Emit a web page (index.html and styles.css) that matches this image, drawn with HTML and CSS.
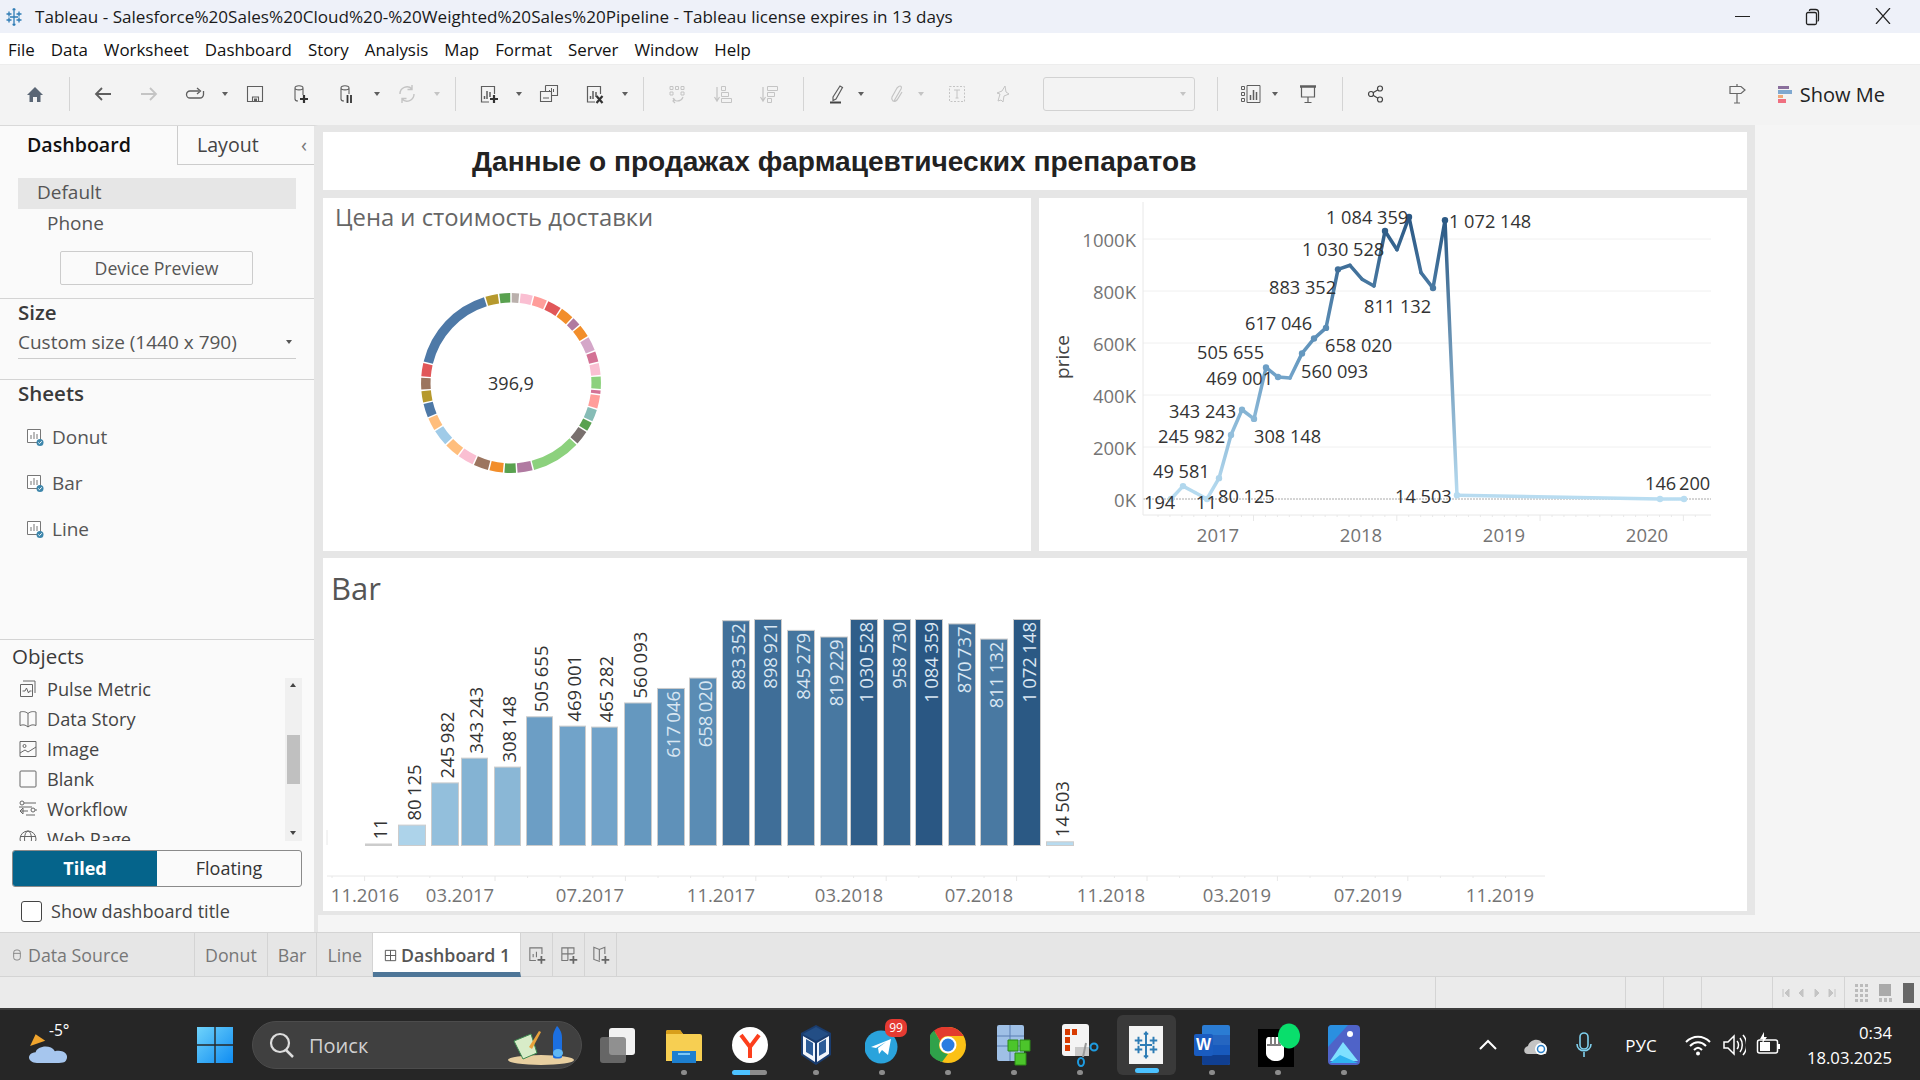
FILE: index.html
```html
<!DOCTYPE html>
<html lang="en">
<head>
    <meta charset="UTF-8">
    <meta name="viewport" content="width=device-width, initial-scale=1.0">
    <title>Tableau - Dashboard 1</title>
    <link rel="stylesheet" href="styles.css">
</head>
<body>
    <svg class="defs" aria-hidden="true">
        <defs>
            <linearGradient id="start-grad" x1="0" y1="0" x2="1" y2="1"><stop offset="0" stop-color="#6fd3fb"/><stop offset="1" stop-color="#0f8cf2"/></linearGradient>
        </defs>
        <symbol id="i-tableau" viewBox="0 0 20 20"><path d="M10 2v16M6 10h8M5 4.500v5M2.500 7h5M15 4.500v5M12.500 7h5M5 10.500v5M2.500 13h5M15 10.500v5M12.500 13h5M10 1v3M8.500 2.500h3M10 16v3M8.500 17.500h3" fill="none" stroke="#2e7cb5" stroke-width="1.300"/></symbol>
        <symbol id="i-home" viewBox="0 0 20 20"><path d="M2 11 10 3l8 8h-2.500v7H12v-5H8v5H4.500v-7z" fill="#5a6675"/></symbol>
        <symbol id="i-back" viewBox="0 0 20 20"><path d="M18 10H3M9 4l-6 6 6 6" fill="none" stroke="currentColor" stroke-width="1.800"/></symbol>
        <symbol id="i-fwd" viewBox="0 0 20 20"><path d="M2 10h15M11 4l6 6-6 6" fill="none" stroke="currentColor" stroke-width="1.800"/></symbol>
        <symbol id="i-redo" viewBox="0 0 20 20"><path d="M14 7H5a3.500 3.500 0 0 0 0 7h10a3.500 3.500 0 0 0 3.500-3.500V7" fill="none" stroke="currentColor" stroke-width="1.300"/><path d="m12 4 3.500 3-3.500 3" fill="none" stroke="currentColor" stroke-width="1.300"/></symbol>
        <symbol id="i-save" viewBox="0 0 20 20"><path d="M2.500 2.500h15v15h-15z" fill="none" stroke="currentColor" stroke-width="1.100"/><path d="M7.500 13h6v4.500h-6z" fill="none" stroke="currentColor" stroke-width="1.100"/><path d="M9 14.500h3v3H9z" fill="currentColor"/></symbol>
        <symbol id="i-ds-add" viewBox="0 0 20 20"><path d="M4 4c0-3 8-3 8 0v7M4 4v11c0 1 1 2 3 2M4 4c0 2.500 8 2.500 8 0" fill="none" stroke="currentColor" stroke-width="1.100"/><path d="M13 11v8M9 15h8" stroke="#333" stroke-width="2.200"/></symbol>
        <symbol id="i-ds-pause" viewBox="0 0 20 20"><path d="M4 4c0-3 8-3 8 0v6M4 4v11c0 1 1 2 3 2M4 4c0 2.500 8 2.500 8 0" fill="none" stroke="currentColor" stroke-width="1.100"/><path d="M10.500 11v8M14 11v8" stroke="#333" stroke-width="1.800"/></symbol>
        <symbol id="i-refresh" viewBox="0 0 20 20"><path d="M3 10a7 7 0 0 1 12-5M17 10a7 7 0 0 1-12 5M15 1v4.500h-4.500M5 19v-4.500h4.500" fill="none" stroke="currentColor" stroke-width="1.400"/></symbol>
        <symbol id="i-new" viewBox="0 0 20 20"><path d="M10 18H2.500V2.500h13V10" fill="none" stroke="currentColor" stroke-width="1.200"/><path d="M5.500 15v-3M8 15V7M11 13V8" stroke="currentColor" stroke-width="1.500"/><path d="M15 11v8M11 15h8" stroke="#333" stroke-width="2.200"/></symbol>
        <symbol id="i-dup" viewBox="0 0 20 20"><path d="M6.500 1.500h12v10H13M6.500 1.500V7M1.500 7.500h11v10h-11z" fill="none" stroke="currentColor" stroke-width="1.100"/><path d="M10.500 8V6M12.500 8V4M14.500 8V5M5 15v-2M7 15v-2M9 15v-2" stroke="currentColor"/></symbol>
        <symbol id="i-clear" viewBox="0 0 20 20"><path d="M10 18H2.500V2.500h13V10" fill="none" stroke="currentColor" stroke-width="1.200"/><path d="M5.500 15v-3M8 15V7M11 13V8" stroke="currentColor" stroke-width="1.500"/><path d="m11.500 12 6 7M17.500 12l-6 7" stroke="#333" stroke-width="2.200"/></symbol>
        <symbol id="i-swap" viewBox="0 0 20 20"><path d="M3 2.500h3v3H3zM8.500 2.500h3v3h-3zM14 2.500h3v3h-3zM3 8h3v3H3zM14 8h3v3h-3z" fill="none" stroke="currentColor"/><path d="M16 13c-1 3-4 4-6 4-1 0-3-1-4-3M8 19l-2-2 2-2" fill="none" stroke="currentColor" stroke-width="1.200"/></symbol>
        <symbol id="i-sort" viewBox="0 0 20 20"><path d="M4 3v14M1.500 13 4 17l2.500-4" fill="none" stroke="currentColor" stroke-width="1.200"/><path d="M8.500 2.500h4v4h-4zM8.500 8.500h7v4h-7zM8.500 14.500h10v4h-10z" fill="none" stroke="currentColor"/></symbol>
        <symbol id="i-sort-d" viewBox="0 0 20 20"><path d="M4 3v14M1.500 13 4 17l2.500-4" fill="none" stroke="currentColor" stroke-width="1.200"/><path d="M8.500 2.500h10v4h-10zM8.500 8.500h7v4h-7zM8.500 14.500h4v4h-4z" fill="none" stroke="currentColor"/></symbol>
        <symbol id="i-pen" viewBox="0 0 20 20"><path d="M6 13 13 2l2.500 1.500L9 15l-3 1.500z" fill="none" stroke="currentColor" stroke-width="1.200"/><path d="M3 18.500h11" stroke="#444" stroke-width="2"/></symbol>
        <symbol id="i-clip" viewBox="0 0 20 20"><path d="M7 17 14 5c1-2 0-3-1-3s-2 1-3 2L5 13c-1 2 0 3 1 4 2 1 3 0 4-1l5-8" fill="none" stroke="currentColor" stroke-width="1.200"/></symbol>
        <symbol id="i-text" viewBox="0 0 20 20"><path d="M2.500 2.500h15v15h-15z" fill="none" stroke="currentColor" stroke-dasharray="2 1.500"/><path d="M7 6h6M10 6v8M8.500 14h3" stroke="currentColor" fill="none"/></symbol>
        <symbol id="i-pin" viewBox="0 0 20 20"><path d="m12 2 1 6 3 2-5 2-1 6-2-2-3 1 2-7-3-1 5-2z" fill="none" stroke="currentColor"/></symbol>
        <symbol id="i-view" viewBox="0 0 20 20"><path d="M.5 2.500h3v3h-3zM.5 8.500h3v3h-3zM.5 14.500h3v3h-3zM6 1.500h13v17H6z" fill="none" stroke="currentColor"/><path d="M9.500 16v-5M12.500 16V6M15.500 16v-8" stroke="currentColor" stroke-width="1.500"/></symbol>
        <symbol id="i-present" viewBox="0 0 20 20"><path d="M2 2.500h16" stroke="currentColor" stroke-width="2.500"/><path d="M3.500 3v10h13V3M10 13v6M6.500 18.500h7" fill="none" stroke="currentColor" stroke-width="1.200"/></symbol>
        <symbol id="i-share" viewBox="0 0 20 20"><circle cx="14" cy="4.500" r="2.500" fill="none" stroke="#444" stroke-width="1.200"/><circle cx="5" cy="10" r="2.500" fill="none" stroke="#444" stroke-width="1.200"/><circle cx="14" cy="15.500" r="2.500" fill="none" stroke="#444" stroke-width="1.200"/><path d="m7 8.700 5-3M7 11.300l5 3" stroke="#444" stroke-width="1.200"/></symbol>
        <symbol id="i-sign" viewBox="0 0 20 20"><path d="M3 2.500h11l4 3.500-4 3.500H3zM10 10v9M7 19h6M10 0v2" fill="none" stroke="#666" stroke-width="1.200"/></symbol>
        <symbol id="i-sheet" viewBox="0 0 20 20"><path d="M2.500 2.500h13v13h-13z" fill="#fff" stroke="#777"/><path d="M6 12V8M9 12V5M12 12V7" stroke="#777"/><circle cx="15" cy="15.500" r="3.500" fill="#3d86ab"/><path d="m13.300 15.500 1.200 1.200 2.200-2.400" fill="none" stroke="#fff"/></symbol>
        <symbol id="i-pulse" viewBox="0 0 20 20"><path d="M5 2h12v12M2.500 5.500h12v12h-12z" fill="none" stroke="#666"/><path d="M4.500 12h2.500l1.500-3 2 5 1-2h2" fill="none" stroke="#666"/></symbol>
        <symbol id="i-book" viewBox="0 0 20 20"><path d="M10 4.500C7 2 4 2.500 2 3v13.500c3-1 5-1 8 1.500 3-2.500 5-2.500 8-1.500V3c-2-.5-5-1-8 1.500zM10 4.500V18" fill="none" stroke="#666"/></symbol>
        <symbol id="i-image" viewBox="0 0 20 20"><path d="M2 2.500h16v15H2z" fill="none" stroke="#666"/><circle cx="6.500" cy="7" r="1.500" fill="none" stroke="#666"/><path d="m2 14 5-3 3 2 8-5" fill="none" stroke="#666"/></symbol>
        <symbol id="i-blank" viewBox="0 0 20 20"><rect x="2" y="2" width="16" height="16" rx="1" fill="none" stroke="#666"/></symbol>
        <symbol id="i-flow" viewBox="0 0 20 20"><circle cx="4" cy="4" r="2" fill="none" stroke="#666"/><circle cx="15" cy="11" r="2" fill="none" stroke="#666"/><path d="M6 4h12M1 8h13M17 11h2M2 12h8M5 9l-3 3 3 3zM8 16h9" fill="none" stroke="#666"/></symbol>
        <symbol id="i-web" viewBox="0 0 20 20"><circle cx="10" cy="10" r="8" fill="none" stroke="#666"/><ellipse cx="10" cy="10" rx="3.500" ry="8" fill="none" stroke="#666"/><path d="M2 7.500h16M2 12.500h16" stroke="#666"/></symbol>
        <symbol id="i-db" viewBox="0 0 12 16"><rect x="2" y="2" width="8" height="12" rx="3" fill="none" stroke="currentColor"/><path d="M2 6h8" stroke="currentColor"/></symbol>
        <symbol id="i-grid" viewBox="0 0 16 16"><path d="M2.500 2.500h11v11h-11zM8 2.500v11M2.500 8h11" fill="none" stroke="#555"/></symbol>
        <symbol id="i-tab-sheet" viewBox="0 0 20 20"><path d="M9 15H3.500V3.500h11V9" fill="none" stroke="#777"/><path d="M6.500 12V9M9.500 12V7" stroke="#777"/><path d="M14 11v7M10.500 14.500h7" stroke="#666" stroke-width="1.600"/></symbol>
        <symbol id="i-tab-dash" viewBox="0 0 20 20"><path d="M9 15H3.500V3.500h11V9M9 3.500V15M3.500 9H14" fill="none" stroke="#777"/><path d="M14 11v7M10.500 14.500h7" stroke="#666" stroke-width="1.600"/></symbol>
        <symbol id="i-tab-story" viewBox="0 0 20 20"><path d="M9 16 3.500 14V3l5 2 5-2v6" fill="none" stroke="#777"/><path d="M8.500 5v10" stroke="#777"/><path d="M14 11v7M10.500 14.500h7" stroke="#666" stroke-width="1.600"/></symbol>
    </svg>

    <div class="app">
        <div class="titlebar">
            <svg class="title-icon"><use href="#i-tableau"/></svg>
            <span class="title-text">Tableau - Salesforce%20Sales%20Cloud%20-%20Weighted%20Sales%20Pipeline - Tableau license expires in 13 days</span>
            <div class="win-buttons">
                <span class="win-btn"><svg width="16" height="16"><path d="M0 8.500h15" stroke="#222"/></svg></span>
                <span class="win-btn"><svg width="16" height="18"><rect x="1.500" y="4.500" width="10" height="12" rx="1.500" fill="none" stroke="#222" stroke-width="1.300"/><path d="M4.500 3V2.500a1 1 0 0 1 1-1h5a3 3 0 0 1 3 3V12a1 1 0 0 1-1 1" fill="none" stroke="#222" stroke-width="1.300"/></svg></span>
                <span class="win-btn"><svg width="16" height="16"><path d="m1 0 14 16M15 0 1 16" stroke="#222" stroke-width="1.200"/></svg></span>
            </div>
        </div>

        <div class="menubar">
            <span>File</span><span>Data</span><span>Worksheet</span><span>Dashboard</span><span>Story</span><span>Analysis</span><span>Map</span><span>Format</span><span>Server</span><span>Window</span><span>Help</span>
        </div>

        <div class="toolbar">
            <span class="tool"><svg class="ico"><use href="#i-home"/></svg></span>
            <span class="sep"></span>
            <span class="tool"><svg class="ico"><use href="#i-back"/></svg></span>
            <span class="tool off"><svg class="ico"><use href="#i-fwd"/></svg></span>
            <span class="tool"><svg class="ico"><use href="#i-redo"/></svg></span><span class="caret"></span>
            <span class="tool"><svg class="ico"><use href="#i-save"/></svg></span>
            <span class="tool"><svg class="ico"><use href="#i-ds-add"/></svg></span>
            <span class="tool"><svg class="ico"><use href="#i-ds-pause"/></svg></span><span class="caret"></span>
            <span class="tool off"><svg class="ico"><use href="#i-refresh"/></svg></span><span class="caret off"></span>
            <span class="sep"></span>
            <span class="tool"><svg class="ico"><use href="#i-new"/></svg></span><span class="caret"></span>
            <span class="tool"><svg class="ico"><use href="#i-dup"/></svg></span>
            <span class="tool"><svg class="ico"><use href="#i-clear"/></svg></span><span class="caret"></span>
            <span class="sep"></span>
            <span class="tool off"><svg class="ico"><use href="#i-swap"/></svg></span>
            <span class="tool off"><svg class="ico"><use href="#i-sort"/></svg></span>
            <span class="tool off"><svg class="ico"><use href="#i-sort-d"/></svg></span>
            <span class="sep"></span>
            <span class="tool"><svg class="ico"><use href="#i-pen"/></svg></span><span class="caret tight"></span>
            <span class="tool off"><svg class="ico"><use href="#i-clip"/></svg></span><span class="caret off tight"></span>
            <span class="tool off"><svg class="ico"><use href="#i-text"/></svg></span>
            <span class="tool off"><svg class="ico"><use href="#i-pin"/></svg></span>
            <span class="combo"><span class="caret off"></span></span>
            <span class="sep"></span>
            <span class="tool"><svg class="ico"><use href="#i-view"/></svg></span><span class="caret tight short"></span>
            <span class="tool"><svg class="ico"><use href="#i-present"/></svg></span>
            <span class="sep"></span>
            <span class="tool"><svg class="ico"><use href="#i-share"/></svg></span>
            <div class="toolbar-right">
                <svg class="ico"><use href="#i-sign"/></svg>
                <span class="showme">
                    <span class="showme-bars"><i class="b1"></i><i class="b2"></i><i class="b3"></i><i class="b4"></i></span>
                    Show Me
                </span>
            </div>
        </div>

        <div class="workspace">
            <aside class="sidebar">
                <div class="side-tabs">
                    <div class="side-tab active">Dashboard</div>
                    <div class="side-tab">Layout <span class="collapse">‹</span></div>
                </div>
                <div class="side-section devices">
                    <div class="device selected">Default</div>
                    <div class="device phone">Phone</div>
                    <div class="device-btn">Device Preview</div>
                </div>
                <div class="side-section size">
                    <div class="side-heading">Size</div>
                    <div class="size-select">Custom size (1440 x 790)<span class="caret"></span></div>
                </div>
                <div class="side-section sheets">
                    <div class="side-heading">Sheets</div>
                    <div class="sheet"><svg class="sheet-icon"><use href="#i-sheet"/></svg>Donut</div>
                    <div class="sheet"><svg class="sheet-icon"><use href="#i-sheet"/></svg>Bar</div>
                    <div class="sheet"><svg class="sheet-icon"><use href="#i-sheet"/></svg>Line</div>
                </div>
                <div class="objects">
                    <div class="objects-heading">Objects</div>
                    <div class="object-list">
                        <div class="object-items">
                            <div class="object"><svg class="object-icon"><use href="#i-pulse"/></svg>Pulse Metric</div>
                            <div class="object"><svg class="object-icon"><use href="#i-book"/></svg>Data Story</div>
                            <div class="object"><svg class="object-icon"><use href="#i-image"/></svg>Image</div>
                            <div class="object"><svg class="object-icon"><use href="#i-blank"/></svg>Blank</div>
                            <div class="object"><svg class="object-icon"><use href="#i-flow"/></svg>Workflow</div>
                            <div class="object"><svg class="object-icon"><use href="#i-web"/></svg>Web Page</div>
                        </div>
                        <div class="scrollbar">
                            <span class="arrow up"></span>
                            <span class="thumb"></span>
                            <span class="arrow down"></span>
                        </div>
                    </div>
                    <div class="toggle">
                        <div class="toggle-btn on">Tiled</div>
                        <div class="toggle-btn">Floating</div>
                    </div>
                    <label class="show-title"><span class="checkbox"></span>Show dashboard title</label>
                </div>
            </aside>

            <main class="dash">
                <div class="tile dash-title">Данные о продажах фармацевтических препаратов</div>
                <div class="dash-row">
                    <div class="tile chart-tile">
                        <div class="tile-title donut-title">Цена и стоимость доставки</div>
                        <svg id="donut" class="chart donut-chart"></svg>
                    </div>
                    <div class="tile chart-tile">
                        <svg id="line" class="chart line-chart"></svg>
                    </div>
                </div>
                <div class="tile chart-tile bar-tile">
                    <div class="tile-title bar-title">Bar</div>
                    <svg id="bar" class="chart bar-chart"></svg>
                </div>
            </main>
        </div>

        <div class="tabs">
            <div class="tab source"><svg class="tab-db"><use href="#i-db"/></svg>Data Source</div>
            <div class="tab">Donut</div>
            <div class="tab">Bar</div>
            <div class="tab">Line</div>
            <div class="tab current"><svg class="tab-grid"><use href="#i-grid"/></svg>Dashboard 1</div>
            <div class="tab add"><svg class="tab-add"><use href="#i-tab-sheet"/></svg></div>
            <div class="tab add"><svg class="tab-add"><use href="#i-tab-dash"/></svg></div>
            <div class="tab add"><svg class="tab-add"><use href="#i-tab-story"/></svg></div>
        </div>

        <div class="status">
            <span class="cell c1"></span><span class="cell c2"></span><span class="cell c3"></span><span class="cell c3"></span><span class="cell c4"></span>
            <span class="cell c5">
                <svg width="54" height="12"><path d="M1 2v8M7 2 3 6l4 4zM21 2l-4 4 4 4zM33 2l4 4-4 4zM47 2l4 4-4 4zM53 2v8" fill="#c4c4c4" stroke="#c4c4c4"/></svg>
            </span>
            <span class="cell c6">
                <svg width="14" height="20"><path d="M1 1h3v3H1zM6 1h3v3H6zM11 1h3v3h-3zM1 6h3v3H1zM6 6h3v3H6zM11 6h3v3h-3zM1 11h3v3H1zM6 11h3v3H6zM11 11h3v3h-3zM1 16h3v3H1zM6 16h3v3H6zM11 16h3v3h-3z" fill="#bbb"/></svg>
                <svg width="14" height="20"><path d="M1 1h12v12H1z" fill="#aaa"/><path d="M1 15h3v4H1zM6 15h3v4H6zM11 15h3v4h-3z" fill="#bbb"/></svg>
                <svg width="12" height="20"><path d="M1 0h11v20H1z" fill="#666"/></svg>
            </span>
        </div>

        <div class="taskbar">
            <div class="weather">
                <svg width="44" height="36" viewBox="0 0 32 34" preserveAspectRatio="none"><path d="M3 16 7 5l7 6z" fill="#f0a42d"/><path d="M8 32c-7 0-8-9-1-10 1-6 11-8 14-1 6-2 11 3 8 9-1 2-3 2-5 2z" fill="#a6c6ee"/></svg>
                <span class="temp">-5°</span>
            </div>
            <div class="task-app start">
                <svg width="36" height="36"><path d="M0 0h17.300v17.300H0zM18.700 0H36v17.300H18.700zM0 18.700h17.300V36H0zM18.700 18.700H36V36H18.700z" fill="url(#start-grad)"/></svg>
            </div>
            <div class="search">
                <svg width="28" height="28"><circle cx="12" cy="12" r="9" fill="none" stroke="#ddd" stroke-width="2.200"/><path d="m18 19 7 7" stroke="#ddd" stroke-width="2.500"/></svg>
                <span class="search-text">Поиск</span>
                <svg class="search-art" width="68" height="40"><ellipse cx="34" cy="35" rx="33" ry="5" fill="#e8cfa0"/><path d="M7 16 24 9l6 19-14 6z" fill="#d8ecc8" stroke="#3d8a50"/><path d="m22 22 10-16 2 1-9 17z" fill="#e9a23b"/><path d="M46 12c0-5 3-9 4-11 2 2 5 6 5 11v20c0 2-9 2-9 0z" fill="#1c6fe0"/><ellipse cx="51" cy="28" rx="5" ry="4" fill="#5fb8f5"/></svg>
            </div>
            <div class="task-app">
                <svg width="38" height="38"><rect x="10" y="2" width="26" height="27" rx="3" fill="#f2f2f2"/><rect x="1" y="11" width="26" height="26" rx="3" fill="#777" opacity=".8"/></svg>
            </div>
            <div class="task-app dot">
                <svg width="38" height="36"><path d="M1 5a2 2 0 0 1 2-2h12l3 4h17a2 2 0 0 1 2 2v25H1z" fill="#f7cf52"/><path d="M1 5a2 2 0 0 1 2-2h12l3 4H1z" fill="#d89f1b"/><path d="M7 24h24v12H7z" fill="#1d7fcf"/><path d="M13 27h12" stroke="#7cc7f5" stroke-width="2"/></svg>
            </div>
            <div class="task-app dot active-dash">
                <svg width="38" height="38"><circle cx="19" cy="19" r="18" fill="#fff"/><path d="M10 9l9 12 9-12M19 21v11" fill="none" stroke="#fc3f1d" stroke-width="4"/></svg>
            </div>
            <div class="task-app dot">
                <svg width="34" height="42"><path d="M17 1 32 9v22L17 41 2 31V9z" fill="#1a3c6e"/><path d="M17 3 30 10 17 17 4 10z" fill="#234e85"/><path d="M4 12l12 7v19L4 30zM30 12 18 19v19l12-8z" fill="#f3f6fb"/><path d="M7 15l7 4v13l-7-4zM27 15l-7 4v13l7-4z" fill="#2c5c98"/></svg>
            </div>
            <div class="task-app dot telegram">
                <svg width="34" height="38"><circle cx="16" cy="21" r="16.500" fill="#2aa3dc"/><path d="m6 21 20-8-3 16-6-5-3 4-1-6 8-6-10 6z" fill="#fff"/></svg>
                <span class="badge">99</span>
            </div>
            <div class="task-app dot">
                <svg width="36" height="36"><circle cx="18" cy="18" r="18" fill="#fbc116"/><path d="M18 0a18 18 0 0 1 15.600 9H18a9 9 0 0 0-8 5L4 3.500A18 18 0 0 1 18 0z" fill="#e33b2e"/><path d="M4 3.500 10 14a9 9 0 0 0 8 13l-6 8A18 18 0 0 1 4 3.500z" fill="#2fa24a"/><circle cx="18" cy="18" r="8.500" fill="#fff"/><circle cx="18" cy="18" r="6.500" fill="#2a7de1"/></svg>
            </div>
            <div class="task-app dot">
                <svg width="36" height="42"><rect x="1" y="1" width="27" height="36" rx="2" fill="#9fc0e6"/><path d="M1 12h27M1 22h27M14 1v36" stroke="#5a7fb3"/><path d="M12 16h10v11H12zM24 16h10v11H24zM19 29h11v12H19z" fill="#4cc52b" stroke="#2a8a16"/></svg>
            </div>
            <div class="task-app dot">
                <svg width="38" height="44"><rect x="1" y="1" width="27" height="32" rx="3" fill="#f4f4f4"/><path d="M4 6h5v6H4zM11 6h5v6h-5zM4 14h5v6H4zM4 22h5v6H4z" fill="#d83b01"/><path d="M14 24h14v9H14z" fill="#c9c9c9"/><path d="M25 20 22 34" stroke="#999" stroke-width="2"/><circle cx="33" cy="24" r="3.500" fill="none" stroke="#1e9be0" stroke-width="2"/><ellipse cx="20" cy="39" rx="3" ry="4" fill="none" stroke="#1e9be0" stroke-width="2"/></svg>
            </div>
            <div class="task-app tableau">
                <span class="tableau-box"><svg width="30" height="30"><use href="#i-tableau"/></svg></span>
            </div>
            <div class="task-app dot">
                <svg width="36" height="40"><rect x="8" y="0" width="28" height="40" rx="2" fill="#2b7cd3"/><path d="M8 10h28v10H8z" fill="#2566c1"/><path d="M8 20h28v10H8z" fill="#185abd"/><path d="M8 30h28v8a2 2 0 0 1-2 2H10a2 2 0 0 1-2-2z" fill="#103f91"/><rect x="0" y="9" width="19" height="22" rx="2" fill="#1a5cc0"/><text x="9.500" y="25" class="word-w">W</text></svg>
            </div>
            <div class="task-app dot">
                <svg width="44" height="44"><rect x="2" y="6" width="36" height="38" fill="#000"/><path d="M10 18c0-4 2-4 3-4h10c3 0 5 2 5 4v14c0 4-4 6-8 6-6 0-10-4-10-8z" fill="#fff"/><path d="M15 14v7M19 14v7M23 14v7M11 22h14" stroke="#000"/><ellipse cx="33" cy="13" rx="11" ry="12.500" fill="#09de6c"/></svg>
            </div>
            <div class="task-app dot">
                <svg width="34" height="40"><rect x="1" y="0" width="32" height="40" rx="4" fill="#4f63c8"/><path d="M1 4a4 4 0 0 1 4-4h16L1 22z" fill="#2a8fe0"/><path d="M3 36 16 17l15 19z" fill="#7fe0ff"/><path d="M3 38 13 30l18 8z" fill="#2fb3f0"/><circle cx="23" cy="9" r="3" fill="#fff"/></svg>
            </div>
            <div class="tray">
                <span class="tray-item chevron"><svg width="18" height="12"><path d="m1 10 8-8 8 8" fill="none" stroke="#fff" stroke-width="2"/></svg></span>
                <span class="tray-item cloud"><svg width="26" height="22"><path d="M5 20c-5 0-5-7 0-8 1-6 11-9 14-3 3 0 6 4 4 11z" fill="#c4c4c4"/><circle cx="18" cy="15" r="6" fill="#fff"/><circle cx="18" cy="15" r="3.500" fill="none" stroke="#2a80c8" stroke-width="1.500"/></svg></span>
                <span class="tray-item mic"><svg width="18" height="26"><rect x="5" y="1" width="8" height="16" rx="4" fill="none" stroke="#7fd0ee" stroke-width="1.600"/><path d="M2 12c0 9 14 9 14 0M9 20v5" fill="none" stroke="#7fd0ee" stroke-width="1.600"/></svg></span>
                <span class="tray-lang">РУС</span>
                <span class="tray-item wifi"><svg width="26" height="22"><path d="M1 8c7-7 17-7 24 0M5 12c5-5 11-5 16 0M9 16c3-3 5-3 8 0" fill="none" stroke="#fff" stroke-width="2"/><circle cx="13" cy="19.500" r="2" fill="#fff"/></svg></span>
                <span class="tray-item volume"><svg width="26" height="24"><path d="M2 9h4l6-6v18l-6-6H2z" fill="none" stroke="#fff" stroke-width="1.500"/><path d="M15 8c2 2 2 6 0 8M18 5c3 4 3 10 0 14M21 2c5 6 5 14 0 20" fill="none" stroke="#fff" stroke-width="1.500"/></svg></span>
                <span class="tray-item battery"><svg width="26" height="26"><rect x="1.500" y="8" width="20" height="13" rx="2" fill="none" stroke="#fff" stroke-width="1.500"/><path d="M4 10h10v9H4z" fill="#fff"/><path d="M23 12v5" stroke="#fff" stroke-width="2"/><path d="M8 0 4 7h3l-1 5 5-7H8z" fill="#fff"/></svg></span>
                <div class="clock"><span>0:34</span><span>18.03.2025</span></div>
            </div>
        </div>
    </div>

    <script src="charts.js"></script>
</body>
</html>
```

FILE: styles.css
```css
* {
    box-sizing: border-box;
}
body {
    margin: 0;
    width: 1920px;
    height: 1080px;
    overflow: hidden;
    font-family: 'Open Sans', sans-serif;
    color: #333;
    background: #f5f5f5;
}
.defs {
    position: absolute;
    width: 0;
    height: 0;
}
.app {
    display: flex;
    flex-direction: column;
    height: 1080px;
}

/* window chrome */
.titlebar {
    height: 33px;
    flex: none;
    display: flex;
    align-items: center;
    background: #eef1f9;
    font-size: 17.100px;
    color: #1a1a1a;
}
.title-icon {
    width: 20px;
    height: 20px;
    margin: 0 11px 0 4px;
}
.win-buttons {
    margin-left: auto;
    display: flex;
    padding-right: 2px;
}
.win-btn {
    width: 70px;
    display: flex;
    justify-content: center;
}
.menubar {
    height: 31px;
    flex: none;
    display: flex;
    align-items: center;
    gap: 16px;
    padding: 2px 0 0 8px;
    background: #fff;
    font-size: 16.900px;
    color: #111;
}

/* toolbar */
.toolbar {
    height: 61px;
    flex: none;
    display: flex;
    align-items: center;
    padding: 0 35px 2px 12px;
    background: #f3f3f3;
    color: #5e5e5e;
    border-top: 1px solid #ededed;
}
.tool {
    width: 46px;
    display: flex;
    justify-content: center;
}
.tool.off,
.caret.off {
    color: #c4c4c4;
}
.ico {
    width: 20px;
    height: 20px;
}
.caret {
    width: 14px;
    display: flex;
    justify-content: center;
}
.caret.tight {
    margin: 0 6px 0 -6px;
}
.caret.tight.short {
    margin-right: 3px;
}
.caret::before {
    content: '';
    border: 3px solid transparent;
    border-top: 4px solid currentColor;
    border-bottom: 0;
}
.sep {
    width: 22px;
    height: 34px;
    background: linear-gradient(#d4d4d4, #d4d4d4) center / 1px 100% no-repeat;
}
.combo {
    width: 152px;
    height: 34px;
    margin: 0 11px 0 17px;
    display: flex;
    align-items: center;
    justify-content: flex-end;
    padding-right: 4px;
    border: 1px solid #d2d2d2;
    border-radius: 3px;
}
.toolbar-right {
    margin-left: auto;
    display: flex;
    align-items: center;
    gap: 31px;
}
.showme {
    display: flex;
    align-items: center;
    gap: 8px;
    font-size: 20px;
    color: #222;
}
.showme-bars {
    display: flex;
    flex-direction: column;
    gap: 1px;
}
.showme-bars i {
    display: block;
    height: 3.500px;
}
.showme-bars .b1 { width: 11px; background: #8a6f9c; }
.showme-bars .b2 { width: 14px; background: #7fa8d0; }
.showme-bars .b3 { width: 5px; background: #f0a878; }
.showme-bars .b4 { width: 8px; background: #ef6f80; }

/* left pane */
.workspace {
    height: 807px;
    flex: none;
    display: flex;
    background: #f5f5f5;
}
.sidebar {
    width: 318px;
    flex: none;
    display: flex;
    flex-direction: column;
    background: #fafafa;
    border-right: 4px solid #e6e6e6;
    border-top: 1px solid #d9d9d9;
}
.side-tabs {
    height: 39px;
    flex: none;
    display: flex;
}
.side-tab {
    font-size: 19.600px;
    line-height: 37px;
    display: flex;
    padding-bottom: 2px;
    color: #444;
    position: relative;
}
.side-tab.active {
    width: 177px;
    padding-left: 27px;
    font-weight: 600;
    color: #111;
}
.side-tab:not(.active) {
    flex: 1;
    padding-left: 19px;
    border-left: 1px solid #ccc;
    border-bottom: 1px solid #ccc;
}
.collapse {
    position: absolute;
    right: 7px;
    top: 0;
    font-size: 20px;
    color: #777;
}
.side-section {
    border-bottom: 1px solid #d4d4d4;
    padding: 0 18px;
    flex: none;
}
.devices {
    height: 134px;
    padding-top: 13px;
}
.device {
    height: 31px;
    line-height: 29px;
    font-size: 19px;
    color: #555;
}
.device.selected {
    padding-left: 19px;
    background: #e6e6e6;
    line-height: 28px;
}
.device.phone {
    height: 30px;
    padding-left: 29px;
}
.device-btn {
    width: 193px;
    height: 34px;
    margin: 12px 0 0 42px;
    border: 1px solid #ccc;
    border-radius: 2px;
    text-align: center;
    line-height: 32px;
    font-size: 17.700px;
    color: #555;
}
.size {
    height: 81px;
}
.sheets {
    height: 260px;
}
.side-heading {
    height: 30px;
    line-height: 26px;
    font-size: 20.500px;
    font-weight: 600;
    color: #3a3a3a;
}
.size-select {
    height: 30px;
    line-height: 26px;
    display: flex;
    justify-content: space-between;
    align-items: center;
    padding-bottom: 3px;
    border-bottom: 1px solid #ccc;
    font-size: 19px;
    color: #555;
}
.sheet {
    height: 46px;
    display: flex;
    align-items: center;
    font-size: 19px;
    color: #555;
    padding-left: 7px;
}
.sheets .side-heading {
    margin-bottom: 4px;
}
.sheet-icon {
    width: 20px;
    height: 20px;
    margin-right: 7px;
}
.objects {
    flex: 1;
    padding: 2px 12px 0;
    min-height: 0;
}
.objects-heading {
    height: 36px;
    line-height: 28px;
    font-size: 20.500px;
    font-weight: 500;
    color: #3a3a3a;
}
.object-list {
    height: 163px;
    display: flex;
    justify-content: space-between;
    overflow: hidden;
}
.object {
    height: 30px;
    display: flex;
    align-items: center;
    font-size: 18.200px;
    color: #444;
    padding-left: 6px;
}
.object-icon {
    width: 20px;
    height: 20px;
    margin-right: 9px;
}
.object-items {
    margin-top: -4px;
}
.scrollbar {
    width: 17px;
    display: flex;
    flex-direction: column;
    align-items: center;
    background: #f0f0f0;
    position: relative;
}
.thumb {
    position: absolute;
    left: 2px;
    top: 57px;
    width: 13px;
    height: 49px;
    background: #c0c0c0;
}
.arrow {
    position: absolute;
    left: 5px;
    border: 3.500px solid transparent;
}
.arrow.up {
    top: 5px;
    border-bottom: 4px solid #444;
    border-top: 0;
}
.arrow.down {
    bottom: 6px;
    border-top: 4px solid #444;
    border-bottom: 0;
}
.toggle {
    display: flex;
    height: 37px;
    margin-top: 9px;
    width: 290px;
    border: 1px solid #8a8a8a;
    border-radius: 3px;
    overflow: hidden;
}
.toggle-btn {
    flex: 1;
    text-align: center;
    line-height: 35px;
    font-size: 18px;
    color: #333;
}
.toggle-btn.on {
    background: #05648b;
    color: #fff;
    font-weight: 700;
}
.show-title {
    display: flex;
    align-items: center;
    gap: 9px;
    margin: 13px 0 0 9px;
    font-size: 18.100px;
    line-height: 22px;
    color: #444;
}
.checkbox {
    width: 21px;
    height: 21px;
    border: 1.500px solid #444;
    border-radius: 3px;
    background: #fff;
}

/* dashboard */
.dash {
    width: 1437px;
    height: 790px;
    flex: none;
    display: flex;
    flex-direction: column;
    padding: 7px 8px 0 5px;
    background: #e6e6e6;
}
.tile {
    background: #fff;
}
.dash-title {
    height: 58px;
    padding-left: 149px;
    line-height: 60px;
    font-family: 'Liberation Sans', sans-serif;
    font-size: 28.100px;
    font-weight: 700;
    color: #222;
}
.dash-row {
    display: flex;
    gap: 8px;
    margin-top: 8px;
}
.chart-tile {
    width: 708px;
    height: 353px;
}
.bar-tile {
    width: 1424px;
    margin-top: 7px;
}
.tile-title {
    color: #666;
}
.donut-title {
    height: 40px;
    line-height: 38px;
    padding-left: 12px;
    font-size: 23.800px;
}
.bar-title {
    height: 60px;
    line-height: 60px;
    padding-left: 8px;
    font-size: 31px;
    color: #555;
}
.chart {
    display: block;
    width: 100%;
    font-family: 'Open Sans', sans-serif;
}
.donut-chart {
    height: 313px;
}
.line-chart {
    height: 353px;
}
.bar-chart {
    height: 293px;
}
.value {
    font-size: 18.200px;
    fill: #333;
}
.bar-value {
    font-size: 18.500px;
    word-spacing: -1.500px;
    fill: #333;
}
.bar-value.inside {
    fill: #d8e6f2;
}
.axis {
    font-size: 18.500px;
    fill: #747474;
}
.axis-title {
    font-size: 19px;
    fill: #444;
}
.center-value {
    font-size: 18px;
    fill: #333;
    text-anchor: middle;
}
.grid {
    stroke: #f0f0f0;
    stroke-width: 1;
}
.tick {
    stroke: #e8e8e8;
    stroke-width: 1;
}

/* sheet tabs and status */
.tabs {
    height: 45px;
    flex: none;
    display: flex;
    background: #e6e6e6;
    border-top: 1px solid #d4d4d4;
    border-bottom: 1px solid #d4d4d4;
    font-size: 17.800px;
    color: #777;
}
.tab {
    display: flex;
    align-items: center;
    padding: 0 10px;
    border-right: 1px solid #d4d4d4;
}
.tab.source {
    width: 195px;
    padding-left: 12px;
}
.tab-db {
    width: 10px;
    height: 14px;
    margin-right: 6px;
    color: #777;
}
.tab.current {
    padding: 5px 10px 0;
    background: #fff;
    border-bottom: 5px solid #4e7698;
    font-weight: 600;
    color: #555;
    margin-bottom: -1px;
}
.tab-grid {
    width: 15px;
    height: 15px;
    margin-right: 3px;
}
.tab.add {
    width: 32px;
    padding: 0 0 0 5px;
}
.tab-add {
    width: 22px;
    height: 22px;
}
.status {
    height: 31px;
    flex: none;
    display: flex;
    background: #ebebeb;
}
.cell {
    height: 100%;
    border-right: 1px solid #d4d4d4;
    display: flex;
    align-items: center;
}
.c1 { width: 1436px; }
.c2 { width: 190px; }
.c3 { width: 38px; }
.c4 { width: 71px; }
.c5 { width: 72px; justify-content: center; }
.c6 {
    flex: 1;
    border-right: 0;
    gap: 10px;
    padding-left: 9px;
}

/* windows taskbar */
.taskbar {
    height: 72px;
    flex: none;
    display: flex;
    align-items: center;
    background: #262626;
    border-top: 2px solid #3c3c3c;
    color: #fff;
}
.weather {
    width: 182px;
    height: 100%;
    position: relative;
    padding: 19px 0 0 26px;
}
.temp {
    position: absolute;
    left: 49px;
    top: 9px;
    font-size: 15.500px;
}
.task-app {
    width: 66px;
    height: 100%;
    display: flex;
    align-items: center;
    justify-content: center;
    flex: none;
    position: relative;
}
.task-app.dot::after {
    content: '';
    position: absolute;
    bottom: 5px;
    left: 30px;
    width: 6px;
    height: 5px;
    border-radius: 3px;
    background: #8c8c8c;
}
.task-app.active-dash::after {
    left: 15px;
    width: 35px;
    background: linear-gradient(90deg, #4cc2ff 50%, #8c8c8c 50%);
}
.badge {
    position: absolute;
    top: 9px;
    right: 8px;
    min-width: 22px;
    padding: 0 2px;
    border-radius: 7px;
    background: #e53a32;
    font-size: 12px;
    line-height: 18px;
    text-align: center;
}
.tableau-box {
    width: 59px;
    height: 60px;
    display: flex;
    align-items: center;
    justify-content: center;
    border-radius: 6px;
    background: #3a3a3a;
    position: relative;
}
.tableau-box svg {
    padding: 2px;
    background: #f4f4f4;
    width: 34px;
    height: 38px;
}
.tableau-box::after {
    content: '';
    position: absolute;
    bottom: 2px;
    left: 18px;
    width: 24px;
    height: 5px;
    border-radius: 3px;
    background: #4cc2ff;
}
.search {
    width: 330px;
    height: 48px;
    margin: 0 3px 0 4px;
    flex: none;
    display: flex;
    align-items: center;
    gap: 13px;
    padding: 0 6px 0 15px;
    border-radius: 24px;
    background: #404040;
    border: 1px solid #4c4c4c;
}
.search-text {
    font-size: 20px;
    color: #d0d0d0;
}
.search-art {
    margin-left: auto;
}
.word-w {
    font-family: 'Liberation Sans', sans-serif;
    font-size: 16px;
    font-weight: 700;
    fill: #fff;
    text-anchor: middle;
}
.tray {
    margin-left: auto;
    display: flex;
    align-items: center;
    padding-right: 28px;
}
.tray-item {
    display: flex;
    justify-content: center;
}
.chevron { width: 48px; }
.cloud { width: 48px; }
.mic { width: 48px; }
.tray-lang {
    width: 66px;
    text-align: center;
    font-size: 17px;
}
.wifi { width: 48px; }
.volume { width: 24px; }
.battery { width: 46px; }
.clock {
    width: 100px;
    display: flex;
    flex-direction: column;
    align-items: flex-end;
    gap: 5px;
    font-size: 16.700px;
    line-height: 20px;
}
```

FILE: charts.js
```js
// values per month, nov 2016 side of the axis first
var sales = [
    { x: 1171, v: 194, label: '194', lx: 1144, ly: 509 },
    { x: 1183, v: 49581, label: '49 581', lx: 1153, ly: 478 },
    { x: 1195, v: 25000 },
    { x: 1207, v: 11, label: '11', lx: 1196, ly: 509 },
    { x: 1219, v: 80125, label: '80 125', lx: 1218, ly: 503 },
    { x: 1231, v: 245982, label: '245 982', lx: 1158, ly: 443 },
    { x: 1242, v: 343243, label: '343 243', lx: 1169, ly: 418 },
    { x: 1254, v: 308148, label: '308 148', lx: 1254, ly: 443 },
    { x: 1266, v: 505655, label: '505 655', lx: 1197, ly: 359 },
    { x: 1278, v: 469001, label: '469 001', lx: 1206, ly: 385 },
    { x: 1290, v: 465282 },
    { x: 1302, v: 560093, label: '560 093', lx: 1301, ly: 378 },
    { x: 1314, v: 617046, label: '617 046', lx: 1245, ly: 330 },
    { x: 1326, v: 658020, label: '658 020', lx: 1325, ly: 352 },
    { x: 1338, v: 883352, label: '883 352', lx: 1269, ly: 294 },
    { x: 1350, v: 898921 },
    { x: 1362, v: 845279 },
    { x: 1374, v: 819229 },
    { x: 1385, v: 1030528, label: '1 030 528', lx: 1302, ly: 256 },
    { x: 1397, v: 958730 },
    { x: 1409, v: 1084359, label: '1 084 359', lx: 1326, ly: 224 },
    { x: 1421, v: 870737 },
    { x: 1433, v: 811132, label: '811 132', lx: 1364, ly: 313 },
    { x: 1445, v: 1072148, label: '1 072 148', lx: 1449, ly: 228 },
    { x: 1457, v: 14503, label: '14 503', lx: 1395, ly: 503 },
    { x: 1660, v: 146, label: '146', lx: 1645, ly: 490 },
    { x: 1684, v: 200, label: '200', lx: 1679, ly: 490 }
];

var bars = [
    { x: 365, w: 27, v: 11, label: '11' },
    { x: 398, w: 28, v: 80125, label: '80 125' },
    { x: 431, w: 28, v: 245982, label: '245 982' },
    { x: 461, w: 27, v: 343243, label: '343 243' },
    { x: 494, w: 27, v: 308148, label: '308 148' },
    { x: 526, w: 27, v: 505655, label: '505 655' },
    { x: 559, w: 27, v: 469001, label: '469 001' },
    { x: 591, w: 27, v: 465282, label: '465 282' },
    { x: 624, w: 28, v: 560093, label: '560 093' },
    { x: 657, w: 28, v: 617046, label: '617 046', inside: true },
    { x: 689, w: 28, v: 658020, label: '658 020', inside: true },
    { x: 722, w: 28, v: 883352, label: '883 352', inside: true },
    { x: 754, w: 28, v: 898921, label: '898 921', inside: true },
    { x: 787, w: 28, v: 845279, label: '845 279', inside: true },
    { x: 820, w: 28, v: 819229, label: '819 229', inside: true },
    { x: 850, w: 28, v: 1030528, label: '1 030 528', inside: true },
    { x: 883, w: 28, v: 958730, label: '958 730', inside: true },
    { x: 915, w: 28, v: 1084359, label: '1 084 359', inside: true },
    { x: 948, w: 28, v: 870737, label: '870 737', inside: true },
    { x: 980, w: 28, v: 811132, label: '811 132', inside: true },
    { x: 1013, w: 28, v: 1072148, label: '1 072 148', inside: true },
    { x: 1046, w: 28, v: 14503, label: '14 503' }
];

// start and end angle clockwise from the top, read off the ring
var slices = [
    [0, 5.7, '#bab0ac'], [5.7, 14.5, '#fabfd2'], [14.5, 24, '#ff9d9a'], [24, 34, '#e15759'],
    [34, 43.5, '#f28e2b'], [43.5, 50, '#b07aa1'], [50, 59, '#f28e2b'], [59, 69, '#d4a6c8'],
    [69, 76.7, '#d37295'], [76.7, 85.3, '#fabfd2'], [85.3, 94.3, '#8cd17d'], [94.3, 97.5, '#d37295'],
    [97.5, 106.9, '#ff9d9a'], [106.9, 115.7, '#86bcb6'], [115.7, 122.6, '#59a14f'], [122.6, 132.8, '#79706e'],
    [132.8, 165.6, '#8cd17d'], [165.6, 176.3, '#b07aa1'], [176.3, 184.7, '#59a14f'], [184.7, 194.4, '#f28e2b'],
    [194.4, 204.8, '#9c755f'], [204.8, 216, '#fabfd2'], [216, 226.5, '#ffbe7d'], [226.5, 238, '#a0cbe8'],
    [238, 247.2, '#ffbe7d'], [247.2, 257, '#4e79a7'], [257, 265.3, '#b6992d'], [265.3, 273.8, '#9c755f'],
    [273.8, 283.3, '#e15759'], [283.3, 343, '#4e79a7'], [343, 352, '#b6992d'], [352, 360, '#59a14f']
];

function hexToRgb(hex) {
    return [1, 3, 5].map(function (i) { return parseInt(hex.substr(i, 2), 16); });
}

function mix(a, b, t) {
    var ca = hexToRgb(a), cb = hexToRgb(b);
    return 'rgb(' + ca.map(function (c, i) { return Math.round(c + (cb[i] - c) * t); }).join(',') + ')';
}

function blue(v) {
    var t = v / 1084359;
    if (t < 0.47) return mix('#b9ddf1', '#6b9ec5', t / 0.47);
    return mix('#6b9ec5', '#2a5783', (t - 0.47) / 0.53);
}

function drawDonut() {
    var cx = 188, cy = 145, r = 85.2, html = '';
    slices.forEach(function (s) {
        var a = (s[0] + 0.5) * Math.PI / 180, b = (s[1] - 0.5) * Math.PI / 180;
        var large = s[1] - s[0] > 180 ? 1 : 0;
        html += '<path d="M' + (cx + r * Math.sin(a)) + ' ' + (cy - r * Math.cos(a)) +
            'A' + r + ' ' + r + ' 0 ' + large + ' 1 ' + (cx + r * Math.sin(b)) + ' ' + (cy - r * Math.cos(b)) +
            '" fill="none" stroke-width="9.500" stroke="' + s[2] + '"/>';
    });
    html += '<text class="center-value" x="' + cx + '" y="' + (cy + 7) + '">396,9</text>';
    document.getElementById('donut').innerHTML = html;
}

function drawLine() {
    var ox = 1039, oy = 198, html = '', defs = '';
    function px(x) { return x - ox; }
    function py(v) { return 499 - oy - v / 200000 * 52; }

    ['0K', '200K', '400K', '600K', '800K', '1000K'].forEach(function (t, i) {
        var y = py(i * 200000);
        if (i > 0) html += '<line class="grid" x1="104" x2="672" y1="' + y + '" y2="' + y + '"/>';
        html += '<text class="axis" x="97" y="' + (y + 8) + '" text-anchor="end">' + t + '</text>';
    });
    html += '<line x1="104" x2="672" y1="' + py(0) + '" y2="' + py(0) + '" stroke="#aaa" stroke-dasharray="2 1"/>';
    html += '<line class="tick" x1="104" x2="104" y1="4" y2="317"/>';
    html += '<line class="tick" x1="104" x2="672" y1="317" y2="317"/>';
    for (var m = 0; m < 46; m++) {
        var tx = 119 + m * 11.94;
        html += '<line class="tick" x1="' + tx + '" x2="' + tx + '" y1="317" y2="' + ((m + 4) % 12 === 0 ? 323 : 319) + '"/>';
    }
    [[2017, 179], [2018, 322], [2019, 465], [2020, 608]].forEach(function (a) {
        html += '<text class="axis" x="' + a[1] + '" y="344" text-anchor="middle">' + a[0] + '</text>';
    });
    html += '<text class="axis-title" transform="translate(30,159) rotate(-90)" text-anchor="middle">price</text>';

    sales.forEach(function (p, i) {
        if (i === 0) return;
        var q = sales[i - 1], id = 'seg' + i;
        defs += '<linearGradient id="' + id + '" gradientUnits="userSpaceOnUse" x1="' + px(q.x) + '" y1="' + py(q.v) +
            '" x2="' + (px(p.x) + 0.01) + '" y2="' + py(p.v) + '"><stop offset="0" stop-color="' + blue(q.v) +
            '"/><stop offset="1" stop-color="' + blue(p.v) + '"/></linearGradient>';
        html += '<line x1="' + px(q.x) + '" y1="' + py(q.v) + '" x2="' + (px(p.x) + 0.01) + '" y2="' + py(p.v) +
            '" stroke="url(#' + id + ')" stroke-width="3.500" stroke-linecap="round"/>';
    });
    sales.forEach(function (p) {
        if (!p.label) return;
        html += '<circle cx="' + px(p.x) + '" cy="' + py(p.v) + '" r="3.200" fill="' + blue(p.v) + '"/>';
    });
    sales.forEach(function (p) {
        if (!p.label) return;
        html += '<text class="value" x="' + px(p.lx) + '" y="' + (p.ly - oy) + '">' + p.label + '</text>';
    });
    document.getElementById('line').innerHTML = '<defs>' + defs + '</defs>' + html;
}

function drawBars() {
    var ox = 323, oy = 618, base = 845 - oy, top = 1, html = '';
    html += '<line class="tick" x1="4" x2="4" y1="' + (base - 15) + '" y2="' + base + '"/>';
    bars.forEach(function (b) {
        var h = Math.max(b.v * 0.0002545, 1.5);
        var y = Math.max(base - h, top);
        var cx = b.x - ox + b.w / 2;
        html += '<rect x="' + (b.x - ox + 0.5) + '" y="' + (y + 0.5) + '" width="' + (b.w - 1) + '" height="' + (base - y) +
            '" fill="' + (b.v < 100 ? '#ccc' : blue(b.v)) + '" stroke="#ccc"/>';
        var ty = b.inside ? y + 3 : y - 4;
        html += '<text class="bar-value' + (b.inside ? ' inside' : '') + '" text-anchor="' + (b.inside ? 'end' : 'start') +
            '" dominant-baseline="central" transform="translate(' + (cx + 1) + ',' + ty + ') rotate(-90)">' + b.label + '</text>';
    });
    html += '<line class="tick" x1="4" x2="1222" y1="258" y2="258"/>';
    for (var m = 0; m < 37; m++) {
        var tx = 9 + m * 32.6;
        html += '<line class="tick" x1="' + tx + '" x2="' + tx + '" y1="258" y2="' + (m % 4 === 1 ? 263 : 260) + '"/>';
    }
    [['11.2016', 365], ['03.2017', 460], ['07.2017', 590], ['11.2017', 721], ['03.2018', 849], ['07.2018', 979],
     ['11.2018', 1111], ['03.2019', 1237], ['07.2019', 1368], ['11.2019', 1500]].forEach(function (a) {
        html += '<text class="axis" x="' + (a[1] - ox) + '" y="284" text-anchor="middle">' + a[0] + '</text>';
    });
    document.getElementById('bar').innerHTML = html;
}

drawDonut();
drawLine();
drawBars();
```
